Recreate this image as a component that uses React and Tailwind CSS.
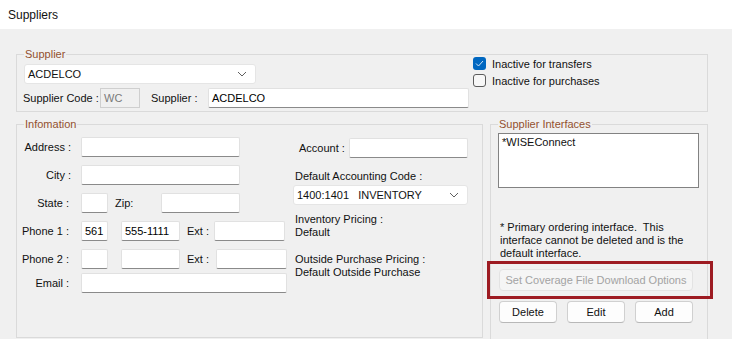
import React from "react";

const inputCls =
  "h-[20px] bg-white border border-[#e1e1e1] border-b-[#8a8a8a] rounded-[2px] flex items-center px-[3px] text-black";

function Chevron() {
  return (
    <svg width="10" height="6" viewBox="0 0 10 6" className="shrink-0">
      <path d="M1 1 L5 5 L9 1" fill="none" stroke="#606060" strokeWidth="1" />
    </svg>
  );
}

function Combo({ w, text, pre }) {
  return (
    <div
      className={`${w} h-[20px] bg-white border border-[#e5e5e5] rounded-[3px] flex items-center justify-between pl-[3px] pr-[8px]`}
    >
      <span className={pre ? "whitespace-pre" : ""}>{text}</span>
      <Chevron />
    </div>
  );
}

function Group({ label, className, children }) {
  return (
    <div className={`relative border border-[#dadada] ${className}`}>
      <span className="absolute -top-[8px] left-[7px] px-[1px] bg-[#f0f0f0] leading-[14px] text-[#93512f]">
        {label}
      </span>
      {children}
    </div>
  );
}

function Btn({ children, className = "" }) {
  return (
    <div
      className={`h-[22px] bg-[#fdfdfd] border border-[#d0d0d0] border-b-[#b8b8b8] rounded-[4px] flex items-center justify-center ${className}`}
    >
      {children}
    </div>
  );
}

export default function App() {
  return (
    <div className="w-[732px] h-[339px] bg-[#f0f0f0] overflow-hidden text-[11px] leading-[14px] text-[#111] font-['Liberation_Sans',Arial,sans-serif]">
      <div className="h-[29px] bg-white flex items-center pl-[8px] text-[12px]">Suppliers</div>

      <div className="pl-[16px] pt-[25px]">
        {/* Supplier */}
        <Group label="Supplier" className="w-[692px] h-[58px] pl-[7px] flex">
          <div className="flex flex-col pt-[9px]">
            <Combo w="w-[232px]" text="ACDELCO" />
            <div className="flex items-center mt-[4px] -ml-[1px]">
              <span className="w-[77px]">Supplier Code :</span>
              <div className="w-[40px] h-[20px] border border-[#cfcfcf] bg-[#f0f0f0] text-[#7a7a7a] flex items-center px-[3px]">
                WC
              </div>
              <span className="ml-[11px] w-[57px]">Supplier :</span>
              <div className={`${inputCls} w-[261px]`}>ACDELCO</div>
            </div>
          </div>
          <div className="flex flex-col ml-[4px]">
            <div className="flex items-center h-[17px] gap-[6px]">
              <div className="w-[13px] h-[13px] rounded-[3px] bg-[#0067c0] flex items-center justify-center">
                <svg width="9" height="7" viewBox="0 0 9 7">
                  <path d="M1 3.5 L3.5 6 L8 1" fill="none" stroke="#cfe3f7" strokeWidth="1" />
                </svg>
              </div>
              <span>Inactive for transfers</span>
            </div>
            <div className="flex items-center h-[17px] gap-[6px]">
              <div className="w-[13px] h-[13px] rounded-[3px] border border-[#5c5c5c] bg-[#f7f7f7]" />
              <span>Inactive for purchases</span>
            </div>
          </div>
        </Group>

        <div className="flex gap-[7px] mt-[12px]">
          {/* Information */}
          <Group label="Infomation" className="w-[467px] h-[214px] flex pt-[12px]">
            <div className="flex flex-col">
              <div className="flex items-center h-[20px]">
                <span className="w-[64px] text-right pr-[10px]">Address :</span>
                <div className={`${inputCls} w-[159px]`} />
              </div>
              <div className="flex items-center h-[20px] mt-[8px]">
                <span className="w-[64px] text-right pr-[10px]">City :</span>
                <div className={`${inputCls} w-[159px]`} />
              </div>
              <div className="flex items-center h-[20px] mt-[8px]">
                <span className="w-[64px] text-right pr-[12px]">State :</span>
                <div className={`${inputCls} w-[27px]`} />
                <span className="ml-[7px] w-[46px]">Zip:</span>
                <div className={`${inputCls} w-[79px]`} />
              </div>
              <div className="flex items-center h-[20px] mt-[8px]">
                <span className="w-[64px] text-right pr-[12px]">Phone 1 :</span>
                <div className={`${inputCls} w-[27px]`}>561</div>
                <div className={`${inputCls} w-[59px] ml-[13px]`}>555-1111</div>
                <span className="ml-[7px] w-[27px]">Ext :</span>
                <div className={`${inputCls} w-[71px]`} />
              </div>
              <div className="flex items-center h-[20px] mt-[8px]">
                <span className="w-[64px] text-right pr-[12px]">Phone 2 :</span>
                <div className={`${inputCls} w-[27px]`} />
                <div className={`${inputCls} w-[59px] ml-[13px]`} />
                <span className="ml-[7px] w-[29px]">Ext :</span>
                <div className={`${inputCls} w-[71px]`} />
              </div>
              <div className="flex items-center h-[20px] mt-[4px]">
                <span className="w-[64px] text-right pr-[12px]">Email :</span>
                <div className={`${inputCls} w-[206px]`} />
              </div>
            </div>

            <div className="flex flex-col ml-[6px] pt-[1px]">
              <div className="flex items-center h-[20px]">
                <span className="ml-[6px] w-[50px]">Account :</span>
                <div className={`${inputCls} w-[119px]`} />
              </div>
              <div className="mt-[11px] ml-[2px]">Default Accounting Code :</div>
              <div className="mt-[2px]">
                <Combo w="w-[175px]" text="1400:1401   INVENTORY" pre />
              </div>
              <div className="mt-[8px] ml-[2px] leading-[13px]">
                Inventory Pricing :
                <br />
                Default
              </div>
              <div className="mt-[14px] ml-[2px] leading-[13px]">
                Outside Purchase Pricing :
                <br />
                Default Outside Purchase
              </div>
            </div>
          </Group>

          {/* Supplier Interfaces */}
          <Group label="Supplier Interfaces" className="w-[218px] h-[240px] pl-[7px] pt-[8px]">
            <div className="w-[201px] h-[55px] bg-white border border-[#828282] px-[3px] pt-[1px]">
              *WISEConnect
            </div>
            <div className="mt-[33px] ml-[2px] leading-[13px] whitespace-pre">
              {"* Primary ordering interface.  This\ninterface cannot be deleted and is the\ndefault interface."}
            </div>
            <div className="relative mt-[9px] ml-[1px] w-[194px]">
              <div className="h-[22px] bg-[#f5f5f5] border border-[#e3e3e3] rounded-[4px] flex items-center justify-center text-[#a3a3a3]">
                Set Coverage File Download Options
              </div>
              <div className="absolute -left-[12px] -right-[20px] -top-[8px] -bottom-[8px] border-[3px] border-[#9d1b22]" />
            </div>
            <div className="flex gap-[10px] mt-[10px] ml-[1px]">
              <Btn className="w-[58px]">Delete</Btn>
              <Btn className="w-[58px]">Edit</Btn>
              <Btn className="w-[58px]">Add</Btn>
            </div>
          </Group>
        </div>
      </div>
    </div>
  );
}
